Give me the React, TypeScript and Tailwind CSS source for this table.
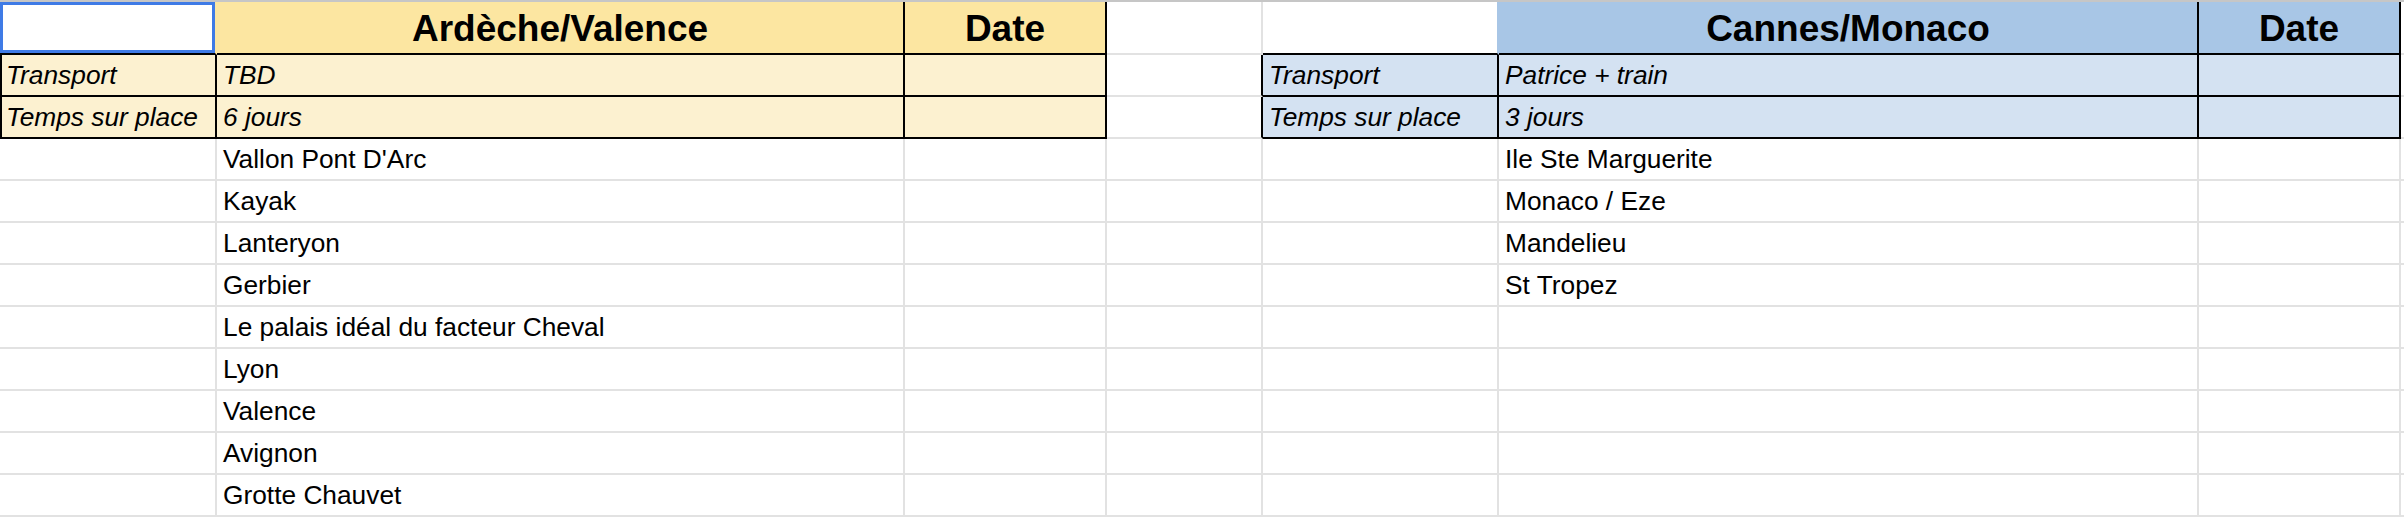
const yellowHead = "bg-[#fce6a1]";
const yellowRow = "bg-[#fcf1d0]";
const blueHead = "bg-[#a8c6e6]";
const blueRow = "bg-[#d4e2f2]";

const leftItems = [
  "Vallon Pont D'Arc",
  "Kayak",
  "Lanteryon",
  "Gerbier",
  "Le palais idéal du facteur Cheval",
  "Lyon",
  "Valence",
  "Avignon",
  "Grotte Chauvet",
];

const rightItems = ["Ile Ste Marguerite", "Monaco / Eze", "Mandelieu", "St Tropez", "", "", "", "", ""];

function Cell({ className = "", children }: { className?: string; children?: React.ReactNode }) {
  return (
    <div className={`border-r-2 border-b-2 flex items-center pl-[6px] pt-[2px] whitespace-nowrap overflow-hidden ${className}`}>
      {children}
    </div>
  );
}

function HeadCell({ className = "", children }: { className?: string; children?: React.ReactNode }) {
  return (
    <div className={`border-r-2 border-b-2 border-r-black border-b-black flex items-center justify-center pt-[3px] font-bold text-[37px] ${className}`}>
      {children}
    </div>
  );
}

const gray = "border-r-[#e2e2e2] border-b-[#e2e2e2]";

export default function App() {
  const infoRows = [
    { label: "Transport", left: "TBD", right: "Patrice + train" },
    { label: "Temps sur place", left: "6 jours", right: "3 jours" },
  ];

  return (
    <div className="w-[2404px] h-[518px] bg-white overflow-hidden text-black text-[26.3px] font-['Liberation_Sans',Arial,sans-serif]">
      <div className="h-[2px] bg-[#c6c6c6]" />
      <div className="grid grid-cols-[217px_688px_202px_156px_236px_700px_202px_1fr] grid-rows-[53px_repeat(11,42px)]">
        {/* row 1 */}
        <div className="relative border-r-2 border-b-2 border-r-[#fce6a1] border-b-black">
          <div className="absolute left-0 top-0 right-0 bottom-0 border-[3px] border-[#3f7be6]" />
        </div>
        <HeadCell className={yellowHead}>Ardèche/Valence</HeadCell>
        <HeadCell className={yellowHead}>Date</HeadCell>
        <Cell className={gray} />
        <Cell className="border-r-[#a8c6e6] border-b-black" />
        <HeadCell className={blueHead}>Cannes/Monaco</HeadCell>
        <HeadCell className={blueHead}>Date</HeadCell>
        <Cell className="border-r-0 border-b-[#e2e2e2]" />

        {/* transport / temps */}
        {infoRows.map((r) => (
          <div key={r.label} className="contents italic">
            <Cell className={`${yellowRow} border-r-black border-b-black shadow-[inset_2px_0_0_#000]`}>{r.label}</Cell>
            <Cell className={`${yellowRow} border-r-black border-b-black`}>{r.left}</Cell>
            <Cell className={`${yellowRow} border-r-black border-b-black`} />
            <Cell className="border-r-black border-b-[#e2e2e2]" />
            <Cell className={`${blueRow} border-r-black border-b-black`}>{r.label}</Cell>
            <Cell className={`${blueRow} border-r-black border-b-black`}>{r.right}</Cell>
            <Cell className={`${blueRow} border-r-black border-b-black`} />
            <Cell className="border-r-0 border-b-[#e2e2e2]" />
          </div>
        ))}

        {/* lists */}
        {leftItems.map((item, i) => (
          <div key={i} className="contents">
            <Cell className={gray} />
            <Cell className={gray}>{item}</Cell>
            <Cell className={gray} />
            <Cell className={gray} />
            <Cell className={gray} />
            <Cell className={gray}>{rightItems[i]}</Cell>
            <Cell className={gray} />
            <Cell className="border-r-0 border-b-[#e2e2e2]" />
          </div>
        ))}
      </div>
    </div>
  );
}
